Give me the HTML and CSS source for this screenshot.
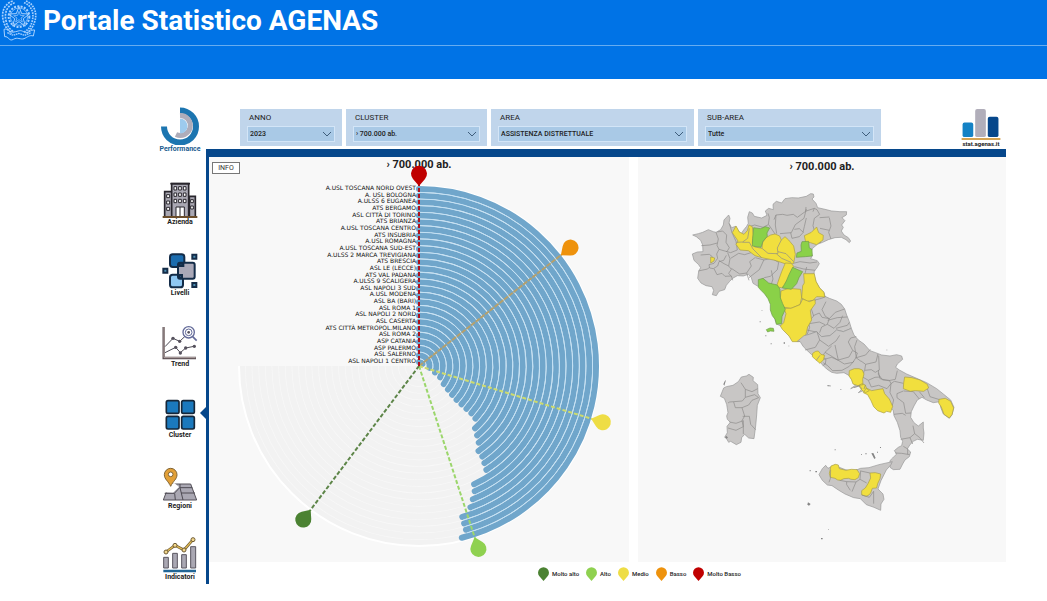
FILE: index.html
```html
<!DOCTYPE html>
<html lang="it">
  <head>
    <meta charset="UTF-8" />
    <meta name="viewport" content="width=device-width, initial-scale=1.0" />
    <title>Portale Statistico AGENAS</title>
    <link rel="stylesheet" href="styles.css">
  </head>
  <body>
    <header class="site-header">
      <div class="brand">
        <svg class="emblem" viewBox="0 0 114 123" aria-hidden="true">
          <g fill="none" stroke="#a9d2ff">
            <circle cx="57" cy="50" r="31" stroke-width="6" stroke-dasharray="6 4" />
            <circle cx="57" cy="50" r="26" stroke-width="2" />
            <path d="M57 20l8 21 23 1-18 14 6 22-19-13-19 13 6-22-18-14 23-1z" stroke-width="3" />
            <path d="M57 34l4 12 12 1-10 7 4 12-10-7-10 7 4-12-10-7 12-1z" stroke-width="2" />
            <path d="M38 3C12 12 3 38 10 62s16 30 26 38M44 8C22 16 12 38 18 62s14 26 24 34" stroke-width="5" stroke-dasharray="6 3" />
            <path d="M78 3c24 9 34 35 27 59s-16 30-26 38M72 8c22 8 31 30 25 54s-14 26-24 34" stroke-width="5" stroke-dasharray="5 3" />
            <path d="M12 88c12-4 16 10 30 8s18-8 30 0 18-8 32-6l-4 18c-12-4-18 4-28 8s-20-6-32 2-14-10-26-8z" stroke-width="3" />
            <path d="M22 98l18 8 16-6 18 6 20-8" stroke-width="4" stroke-dasharray="5 2" />
          </g>
        </svg>
        <h1>Portale Statistico AGENAS</h1>
      </div>
    </header>

    <main class="report">
      <aside class="sidebar">
        <a class="performance" href="#performance">
          <svg viewBox="0 0 40 38" aria-hidden="true">
            <path d="M20 4a16 16 0 1 1-16 16" fill="none" stroke="#1c75b0" stroke-width="6" />
            <path d="M20 9a10 10 0 1 1-4 19" fill="none" stroke="#aeadba" stroke-width="5" />
            <path d="M20 12a7 7 0 0 1 0 15z" fill="#9dcbee" />
          </svg>
          <span>Performance</span>
        </a>
        <nav class="menu" aria-label="Sezioni">
          <a href="#azienda">
            <svg viewBox="0 0 108 108" aria-hidden="true">
              <g fill="#aaa8b3" stroke="#29262d" stroke-width="5">
                <path d="M8 105V29h23v76zM82 105V43h18v62z" />
                <path d="M29 105V5h51v100z" />
                <path d="M25 5h59" />
              </g>
              <g fill="#fff" stroke="#29262d" stroke-width="3">
                <path d="M36 14h8v10h-8zM50 14h8v10h-8zM64 14h8v10h-8zM36 33h8v10h-8zM50 33h8v10h-8zM64 33h8v10h-8zM36 52h8v10h-8zM50 52h8v10h-8zM64 52h8v10h-8z" />
                <path d="M14 38h9v9h-9zM14 57h9v9h-9zM14 76h9v9h-9zM86 53h8v9h-8zM86 72h8v9h-8z" />
                <path d="M42 75h25v30H42zM54 75v30" />
              </g>
              <path d="M2 105h104" stroke="#6b4e2c" stroke-width="6" />
            </svg>
            <span>Azienda</span>
          </a>
          <a href="#livelli">
            <svg viewBox="0 0 108 108" aria-hidden="true">
              <g stroke="#142c48" stroke-width="6">
                <rect x="24" y="4" width="43" height="38" rx="8" fill="#1c6cae" />
                <rect x="24" y="65" width="39" height="38" rx="8" fill="#8fc7f2" />
                <rect x="48" y="29" width="50" height="48" rx="6" fill="#aaa8b7" />
                <path d="M51 32h13v7H51zM51 66h9v8h-9z" fill="#2c5c89" />
                <path d="M91 5h12v12H91zM4 47h12v12H4zM91 90h12v12H91z" fill="#4c8fb3" />
              </g>
            </svg>
            <span>Livelli</span>
          </a>
          <a href="#trend">
            <svg viewBox="0 0 108 108" aria-hidden="true">
              <path d="M5 9v93h97" fill="none" stroke="#594d51" stroke-width="7" />
              <path d="M6 9v92h95" fill="none" stroke="#b4a7a6" stroke-width="3" />
              <g fill="none" stroke="#4d4b55" stroke-width="3">
                <path d="M9 68l24-25 20 9 16-15M9 86l32-16 14 16 16-14 25-5" />
                <circle cx="80" cy="25" r="17" stroke="#636a99" stroke-width="4" />
                <circle cx="80" cy="25" r="10" stroke="#636a99" />
                <path d="M92 38l12 12" stroke="#636a99" stroke-width="5" />
              </g>
              <g fill="#55515d">
                <circle cx="33" cy="43" r="5" /><circle cx="53" cy="52" r="5" /><circle cx="80" cy="25" r="4" />
                <circle cx="41" cy="70" r="5" /><circle cx="55" cy="87" r="5" /><circle cx="71" cy="72" r="5" /><circle cx="97" cy="67" r="5" />
              </g>
            </svg>
            <span>Trend</span>
          </a>
          <a class="active" href="#cluster" aria-current="page">
            <svg viewBox="0 0 108 108" aria-hidden="true">
              <g fill="#1b79bd" stroke="#162739" stroke-width="5">
                <rect x="13" y="17" width="38" height="38" rx="5" /><rect x="59" y="17" width="38" height="38" rx="5" />
                <rect x="13" y="64" width="38" height="38" rx="5" /><rect x="59" y="64" width="38" height="38" rx="5" />
              </g>
            </svg>
            <span>Cluster</span>
          </a>
          <a href="#regioni">
            <svg viewBox="0 0 108 108" aria-hidden="true">
              <path d="M22 54h64l18 48H4z" fill="#aaa8b3" stroke="#555159" stroke-width="3" />
              <path d="M38 52h-18L9 79l24 1 18-17z" fill="#fff" />
              <path d="M8 82h29l16-17h38M40 102l-2-20M63 102l-9-37V54M57 81h42" fill="none" stroke="#4e4b53" stroke-width="3" />
              <path d="M26 61C19 45 7 40 7 26a19 19 0 0 1 38 0c0 14-12 19-19 35z" fill="#e2a038" stroke="#806333" stroke-width="3" />
              <circle cx="26" cy="25" r="7" fill="#fff" stroke="#806333" stroke-width="3" />
            </svg>
            <span>Regioni</span>
          </a>
          <a href="#indicatori">
            <svg viewBox="0 0 108 108" aria-hidden="true">
              <g fill="#aaa8b3" stroke="#5a5660" stroke-width="3">
                <path d="M5 61h14v32H5zM32 49h14v44H32zM59 53h14v40H59zM86 29h15v64H86z" />
              </g>
              <path d="M12 45l27-20 27 14 27-31" fill="none" stroke="#6f5c35" stroke-width="8" />
              <path d="M12 45l27-20 27 14 27-31" fill="none" stroke="#e3bc54" stroke-width="4" />
              <g fill="#f1d68b" stroke="#6f5c35" stroke-width="3">
                <circle cx="12" cy="45" r="6" /><circle cx="39" cy="25" r="6" /><circle cx="66" cy="39" r="6" /><circle cx="93" cy="8" r="6" />
              </g>
              <path d="M4 102h98" stroke="#226696" stroke-width="8" />
            </svg>
            <span>Indicatori</span>
          </a>
        </nav>
      </aside>

      <div class="content">
        <div class="toolbar">
          <form class="filters">
            <div class="filter">
              <label for="anno">ANNO</label>
              <div class="select-box">
                <select id="anno"><option>2023</option></select>
                <svg viewBox="0 0 8 5" aria-hidden="true"><path d="M0 0l4 4 4-4" /></svg>
              </div>
            </div>
            <div class="filter">
              <label for="cluster">CLUSTER</label>
              <div class="select-box">
                <select id="cluster"><option>› 700.000 ab.</option></select>
                <svg viewBox="0 0 8 5" aria-hidden="true"><path d="M0 0l4 4 4-4" /></svg>
              </div>
            </div>
            <div class="filter">
              <label for="area">AREA</label>
              <div class="select-box">
                <select id="area"><option>ASSISTENZA DISTRETTUALE</option></select>
                <svg viewBox="0 0 8 5" aria-hidden="true"><path d="M0 0l4 4 4-4" /></svg>
              </div>
            </div>
            <div class="filter">
              <label for="sub-area">SUB-AREA</label>
              <div class="select-box">
                <select id="sub-area"><option>Tutte</option></select>
                <svg viewBox="0 0 8 5" aria-hidden="true"><path d="M0 0l4 4 4-4" /></svg>
              </div>
            </div>
          </form>
          <a class="stat-logo" href="#stat">
            <svg viewBox="0 0 40 33" aria-hidden="true">
              <rect x="1" y="14" width="11" height="15" rx="2" fill="#1482c5" />
              <rect x="14" y="0" width="11" height="29" rx="2" fill="#b1aeba" />
              <rect x="27" y="8" width="11" height="21" rx="2" fill="#06478b" />
              <path d="M0 31h40" stroke="#d5a454" stroke-width="2" />
            </svg>
            <span>stat.agenas.it</span>
          </a>
        </div>

        <div class="board">
          <div class="panels">
            <section class="panel">
              <div class="panel-head">
                <button class="info-button" type="button">INFO</button>
                <h2>› 700.000 ab.</h2>
              </div>
              <svg class="chart" id="radial-chart" viewBox="209 175 420 387" role="img" aria-label="Performance per azienda"></svg>
            </section>

            <section class="panel">
              <div class="panel-head map-head">
                <h2>› 700.000 ab.</h2>
              </div>
              <svg class="map" viewBox="638 175 368 387" role="img" aria-label="Mappa delle aziende">
                <!-- Nord e centro -->
                <g transform="translate(680 185) scale(.3333)">
                  <path class="land" d="M38 150l17-4 13-4 17-8 15 6 8 2 14-8 8-14 2-15 14-15 4 10-3 15 8 13 12-4 8 13 8 10 8-12 9-11 5-9-2-18 5-17 9 4 6 10 22 5 16-8-5-13 10-8 14 4-1-16 10-9 16 5 10-13 20-3 20 1 24-5 13-8 8 1 2 9-6 6 12 13 5 13 22 5 20 5 25 2 20 0-1 10-13 8 9 9-10 13 5 7-6 11 8 12 13 8 7 10-4 5-10-9-14-7-19 1-20 6-17 8-16 6-14 12-5 10 4 12-5 9 20 6 6 9-8 14-7 8-1 10 6 22 10 18 14 14 3 12 13 6 22 8 14 10 10 14 6 18 8 20 6 20-24 10-20-5-20 17-25 3-15-15-22 8-16 4-20 17-12-4-10-11-15-15-11-15-14-7-5-12 2-24-7-15 4-26-10-22-10-16-14-5-16 7-15-9-5-17-9-10-15 5-18-1-14 8-9 9-10 12-5 13-17 5-8 13-12-3 4-13-5-11-18-3-15-8-10-14 3-21 6-11-7-10-13-12-5-19 15-6 17-1-1-20-6-14-13-11z" />
                  <path class="border" d="M64 182l26-2 22-6M108 142l7 20-4 19 6 12 24 7 7-12-10-16 2-22-12-12-16 3M148 115l8 28 12 26 4 26-20 8-14-4M62 210l26-2 10 8M117 193l-7 14 3 13-11 15-15 4 2 10 11 2 13-8 4-13 14-4 8-15M102 251l9 18 15-4 9 9 19-1 4 13M143 203l7 18-4 22 8 10-8 12 8 9M146 243l-14-7-16-10M55 258l28-6 6-6M152 220l24-15 18 4 22-7M154 250l25 17 21-3 14-21-5-13 16-12M200 264l7 22M207 278l31-24 14-30M226 218l26 7 22-5 22 12-4 22-21 20-18 4-12 10M274 256l5 26-6 19M208 125l16-5 25 7 16-8 3-22-4-12M266 119l20 29M282 104l6-14 20-2 13 3 19-3 12 9 25-18 1-13M288 90l-2 30 4 26M300 146l34-3 12-24 26-19 7-28M332 143l4 17 22-5 12-13-12-11-15 2M376 79l27-9 8 4M403 70l-4 10M379 99l-6 26-4 17M411 74l8 14-16 12-4 22 4 14M419 98l29-2M448 98l5 25-7 19 7 20M420 130l28 6M423 174l-8-8M340 235l20-5 30 4 21-3M343 245l28 7 35 4M375 266l5-20M405 345l20-5 12-5M406 345l-13 24 8 24-16 18 4 16-7 20M400 392l18-8 8 13 22 4M438 350l-12 24 10 20 12 7-6 17-17 8-6 17M388 416l30-5 17 8M448 401l18-19 28-10M443 406l29-8 30-2M442 418l20 12 18-18 8-20M468 430l34-9 6-9M380 435l29 6" />
                  <path class="medio" d="M157 143L168 123L178 141L192 148L202 137L207 120L217 125L220 150L217 172L224 186L246 190L248 172L258 158L272 150L285 147L299 153L304 165L315 155L326 165L341 183L346 208L341 235L315 236L285 226L245 218L225 212L205 197L180 195L168 178L174 168z" />
                  <path class="medio" d="M373 152l21-10 16-16 6 17 14 8-1 14-19 14-19-6-14-1zM316 234l18 1 7 9-8 18-8 19-9 20-11 7-16-2 8-24 8-22zM371 266l32 0 5 23 11 20 13 13 2 14-24-1-11 11-17 3-17-10 3-37 5-8zM303 318l23-8 36 3 3 25-5 21-27 11-28-4-5-13z" />
                  <path class="medio" d="M302 370l31 0 27-11 8-17 20 8 17-6 1 12-15 21 4 28-12 21-6 26-18 18-22 0-10-17-20-20-6-10 10-10 7-27-4-10z" />
                  <path class="medio" d="M92 216l12 3-2 9-10 6z" />
                  <path class="alto" d="M221 128l20 3 16-6 12 4-8 15 1 10-13 15-6 18-26-4 1-23zM366 170l20-1 2 20 8 4 1 20-21 2-27 2 2-13 13-5-1-19zM338 247l13 6 17 7-11 18-7 18-16 17-27-4 12-21 8-19zM235 284l14-4 17 14 26 6 8 13 1 25 7 18 8 17-10 22-1 21-16 2-3-14-9-12-6-17 0-17-7-17-10-14-11-11-8-9z" />
                  <path class="border" d="M170 172l18-1 15-11 5-30M188 172l20 0 11 20 26 26M246 190l18 15 25 1 16 14 28 12M304 165l-12 24 2 16 -5 1M294 200l24 6 23 24" />
                  <path class="alto" d="M259 434l11-5 10 1 2 9-11-1-8 3z" />
                  <path class="isle" d="M239 409h3v3h-3zM256 451h3v3h-3zM272 475h3v3h-3zM311 472h4v4h-4zM325 482h3v2h-3zM245 375h2v2h-2z" />
                </g>
                <!-- Sud e isole -->
                <g transform="translate(710 320) scale(.3333)">
                  <path class="land" d="M262 64l20-17 16-4 22-8 15 15 25-3 20-17 20 5 24-10 8 20 13 15 17 12 18 20 17 6 18 7 25 3 20-4 15 4 3 10-16 14-5 10 11 8 22 12 30 13 30 13 30 18 20 16 22 18 10 22-6 23-8 10-18-13-8-20-2-17-20 3-20-8-14-8-14 8-10 18-8 17-2 17 10 16 13 10 15-12 0 18 2 15-2 22-18-3-12 6-10 10-8 13 10 9-4 14-13 10-7 12-8 16-20 1-10-7 0-20 8-8 12-12-7-10 12-10 10-5 3-13-6-12-2-20-8-25-10-20-2-15-10-10-12 7-20-5-12-14-8-18-10-16-13-6-20 8 5-4 10-14-10-2-18 4-10 4 14-10-8-14-10-15-16-9-22 2-15-3-15-10-15-15-13-15-17-13-15-14-10-10-10-16z" />
                  <path class="border" d="M285 90l31-8 13-22-8-25M329 60l27 19 22-16 11-17M365 78l-20 19-8 13M345 97l22 13 18 11M375 75l6 28 4 17 32-9 11-20-13-25 7-12 17-4M342 118l23-6 20 9 18 11 26-5 10-16M340 128l13 9 15 15 28-1 22-12 14-16M337 110l11 8-2 14-8 5M429 92l13 7-4 14 15 11M441 60l-7 20 5 33 28-8 14-17M453 123l14 10-3 18 20-2 12 8 12-7-2-43M467 133l31-7 6-24M463 151l-5 20 17 10 9 20 22-5 25 10 12-15-5-10-20-1-13-17 1-13M475 181l20-9 16-1M506 158l4 18 26 6 20-4 6-26M543 191l10-7 27 6M543 191l-3 27 11 22-5 20M580 213l-19 8 0 12 20 15 6 32 16-1M552 283l25-3 10 6M581 213l29 2 18 22M628 215l15 18M652 206l8 24 29 9M572 358l28-5 14-12 14 11 14 17M614 341l-5-24M580 379l13 8 0 16M555 399l20 1 24 4M600 353l8 19" />
                  <path class="medio" d="M418 152l15-6 14 0 10 4 5 12-4 16 1 16-15 3-15-5-5-14-7-10zM447 196l9-5 10 4 4 11 8 6-12 6-10-7-6-8zM469 204l16 8 16-3 18-3 5 15 14 16 10 22-6 18-12-3-8 5-19-7-12-12-8-18-10-18-13-6zM584 171l22 2 24 7 22 13 4 11-15 10-25-2-15 2-21-8 1-17zM687 238l19-3 16 9 9 20-5 20-8 10-16-11-8-22-8-12z" />
                  <path class="medio" d="M308 100l9-6 8-1 8 10 11 3-4 14-10 10-13-11-10-9z" />
                  <path class="border" d="M330 106l-11 15M432 203l16-6 8 10M466 195l-4 12" />
                  <path class="land" d="M41 204l8-4 20-4 16-11 9-14 15-3 8-5 13 9-1 10 14 12 1 27 7 12-9 23-2 29-3 33-5 38-16-2-12-11-9 10-2 14-14 7-17-10-6 3-7-12-5-3 8-14-1-19 10-12-9-9-2-10 4-10-4-25-7-18-12-6z" />
                  <path class="border" d="M93 188l13 20 0 24-9 11-38 3-5 3M106 208l20 7 17-9M106 232l28-8 12 9M71 246l5 17 20 0 8 25-8 14 4 18-22 11-24-7M96 263l20-8 10-14 20-8M98 289l20 0 4 24 15 16M100 302l0 40M58 306l20 4 22-8" />
                  <path class="land" d="M327 464l10-18 10-10 7 9 21-10 13 7 18 7 22 5 24-9 25-2 30-9 40-9-4 9-14 16-7 14-9 18-9 25 15 15 3 16-9 14-1 19-20-9-23-8-18-18-20-3-26-11-20-12-19-13-14-2-15-14z" />
                  <path class="medio" d="M363 438l13-5 9 2 3 11 20 5 16-3 17 1 8 12-4 12-10 6-12-1-7-3-14 1-11 5-8-1-8-5-14-3-3-12zM480 459l16-1 16 4-2 14-7 15-3 13-13 1-5 14-5 6-9 4-13-4 0-13 11-8 8-13 8-17z" />
                  <path class="border" d="M362 449l-1 27-4 11M389 481l21 4 0 9 11 17M410 485l28 1 12-8 2-26M438 486l-12 29M450 478l20 11M452 453l28 6M456 525l22 7 13-18M491 514l0 37" />
                  <path class="isle" d="M299 450h3v4h-3zM316 453h5v4h-5zM294 547l8 5-5 5-5-3zM333 654h5v4h-5zM354 628h2v2h-2zM374 388h3v3h-3zM453 403h3v2h-3zM466 400h4v3h-4zM484 400l6-1 7 15-4 3zM501 395h3v3h-3zM510 381h3v3h-3zM352 195l11 2v2h-10zM391 208h3v2h-3zM529 89h3v2h-3zM45 351l5-3 4 5-5 3zM40 193l4-9 4-4-5 17z" />
                </g>
              </svg>
            </section>
          </div>

          <ul class="legend">
            <li class="molto-alto"><svg viewBox="-9 -10 18 22" aria-hidden="true"><path d="M0 12L-6 5A8 8 0 1 1 6 5z" /></svg>Molto alto</li>
            <li class="alto"><svg viewBox="-9 -10 18 22" aria-hidden="true"><path d="M0 12L-6 5A8 8 0 1 1 6 5z" /></svg>Alto</li>
            <li class="medio"><svg viewBox="-9 -10 18 22" aria-hidden="true"><path d="M0 12L-6 5A8 8 0 1 1 6 5z" /></svg>Medio</li>
            <li class="basso"><svg viewBox="-9 -10 18 22" aria-hidden="true"><path d="M0 12L-6 5A8 8 0 1 1 6 5z" /></svg>Basso</li>
            <li class="molto-basso"><svg viewBox="-9 -10 18 22" aria-hidden="true"><path d="M0 12L-6 5A8 8 0 1 1 6 5z" /></svg>Molto Basso</li>
          </ul>
        </div>
      </div>
    </main>

    <script src="chart.js"></script>
  </body>
</html>
```

FILE: styles.css
```css
/* Reset CSS */
* {
  margin: 0;
  padding: 0;
  box-sizing: border-box;
}

body {
  font-family: Roboto, "Liberation Sans", sans-serif;
  background-color: #fff;
  color: #222;
}

a {
  color: inherit;
  text-decoration: none;
}

svg {
  display: block;
}

/* Header */
.site-header {
  height: 79px;
  background-color: #0073e6;
  color: #fff;
}

.brand {
  display: flex;
  align-items: center;
  gap: 5px;
  height: 46px;
  padding-bottom: 4px;
  border-bottom: 1px solid #66acf0;
}

.emblem {
  width: 38px;
  height: 41px;
}

.brand h1 {
  font-size: 28px;
  line-height: 40px;
  font-weight: 700;
}

/* Report */
.report {
  display: flex;
  padding: 27px 41px 16px 158px;
}

.sidebar {
  width: 48px;
  padding-right: 4px;
  flex-shrink: 0;
}

.sidebar a {
  display: flex;
  flex-direction: column;
  align-items: center;
  font-size: 7px;
  line-height: 8px;
  font-weight: 700;
}

.sidebar .performance {
  color: #1a5c8f;
}

.performance svg {
  width: 40px;
  height: 39px;
}

.menu {
  margin-top: 29px;
}

.menu a {
  position: relative;
  height: 71px;
}

.menu svg {
  width: 36px;
  height: 36px;
}

.menu .active::after {
  content: "";
  position: absolute;
  top: 12px;
  right: -4px;
  border: 6px solid transparent;
  border-right-color: #06478b;
  border-left: 0;
}

.content {
  flex: 1;
  min-width: 0;
}

/* Filters */
.toolbar {
  display: flex;
  padding: 3px 5px 3px 34px;
}

.filters {
  flex: 1;
  display: grid;
  grid-template-columns: 102fr 141fr 203fr 183fr;
  gap: 4px;
  margin-right: 80px;
}

.filter {
  height: 37px;
  padding: 3px 7px;
  background-color: #c0d5eb;
}

.filter label {
  display: block;
  padding-left: 2px;
  font-size: 8px;
  line-height: 11px;
}

.select-box {
  display: grid;
  align-items: center;
  margin-top: 3px;
}

.select-box select,
.select-box svg {
  grid-area: 1 / 1;
}

.select-box select {
  width: 100%;
  height: 16px;
  padding: 0 2px;
  border: 1px solid #d3e5f7;
  border-radius: 0;
  background-color: #a9c9e6;
  color: #222;
  font-family: inherit;
  font-size: 7px;
  font-weight: 500;
  appearance: none;
}

.select-box svg {
  justify-self: end;
  width: 8px;
  height: 5px;
  margin-right: 4px;
  fill: none;
  stroke: #3f5e7c;
  pointer-events: none;
}

.stat-logo {
  width: 40px;
  height: 37px;
  font-size: 6px;
  line-height: 6px;
  font-weight: 700;
  text-align: center;
}

.stat-logo svg {
  width: 40px;
  height: 32px;
}

/* Panels */
.board {
  border-top: 8px solid #06478b;
  border-left: 3px solid #06478b;
}

.panels {
  display: grid;
  grid-template-columns: 420fr 368fr;
  gap: 9px;
}

.panel {
  background-color: #f8f8f8;
}

.panel-head {
  display: grid;
  grid-template-columns: 1fr auto 1fr;
  height: 18px;
}

.panel-head h2 {
  grid-column: 2;
  font-size: 11px;
  line-height: 16px;
  font-weight: 700;
}

.map-head {
  padding-top: 2px;
}

.info-button {
  justify-self: start;
  width: 28px;
  height: 12px;
  margin: 5px 0 0 3px;
  border: 1px solid #777;
  background-color: #fff;
  color: #333;
  font-family: inherit;
  font-size: 7px;
  line-height: 10px;
}

.chart,
.map {
  width: 100%;
  height: auto;
  overflow: visible;
}

/* Radial chart */
.track {
  fill: none;
  stroke: #f2f2f2;
  stroke-width: 6;
}

.rim {
  fill: none;
  stroke: #fff;
  stroke-width: 2;
}

.gap {
  fill: none;
  stroke: #b5def8;
  stroke-width: 2;
}

.bar {
  fill: none;
  stroke: #70a6cb;
  stroke-width: 6;
  stroke-linecap: round;
}

/* Light line over the edge between two bars */
.divider {
  fill: none;
  stroke: #c3e1f5;
  stroke-width: 1;
}

.name {
  font-family: "DejaVu Sans", sans-serif;
  font-size: 6px;
  text-anchor: end;
  fill: #111;
}

.needle {
  stroke-width: 1;
  stroke-dasharray: 4 2;
}

.needle.basso {
  stroke-dasharray: 5 1;
  stroke-width: 2;
  stroke: #b5a06c;
}

.needle.alto,
.needle.medio,
.needle.molto-alto {
  stroke-width: 2;
}

.needle.molto-alto { stroke: #5d8548; }
.needle.alto { stroke: #9bd66b; }
.needle.medio { stroke: #cddb6e; }
.needle.molto-basso { stroke: #b0101c; stroke-width: 2; }

.pin.molto-alto, .legend .molto-alto svg { fill: #4b8232; }
.pin.alto, .legend .alto svg { fill: #8fd150; }
.pin.medio, .legend .medio svg { fill: #eedd45; }
.pin.basso, .legend .basso svg { fill: #ee920c; }
.pin.molto-basso, .legend .molto-basso svg { fill: #c00000; }

/* Map */
.map path {
  stroke-width: 2;
  stroke-linejoin: round;
}

.map .land {
  fill: #c8c6c5;
  stroke: #969595;
}

.map .border {
  fill: none;
  stroke: #8b8988;
}

.map .medio {
  fill: #f1df3e;
  stroke: #a79d45;
}

.map .alto {
  fill: #8ad148;
  stroke: #6d994b;
}

.map .isle {
  fill: #858585;
}

/* Legend */
.legend {
  display: flex;
  gap: 6px;
  height: 22px;
  padding-left: 328px;
  list-style: none;
  font-size: 6px;
  font-weight: 500;
}

.legend li {
  display: flex;
  align-items: center;
  gap: 2px;
}

.legend svg {
  width: 13px;
  height: 15px;
}
```

FILE: chart.js
```js
const SVG_NS = "http://www.w3.org/2000/svg";
const chart = document.getElementById("radial-chart");
const cx = 419;
const cy = 366;
const outerRadius = 177;
const innerRadius = 4;

// From the outer ring to the inner one: name, end angle in degrees
const aziende = [
  ["A.USL TOSCANA NORD OVEST", 166],
  ["A. USL BOLOGNA", 164],
  ["A.ULSS 6 EUGANEA", 164],
  ["ATS BERGAMO", 164],
  ["ASL CITTÀ DI TORINO", 160],
  ["ATS BRIANZA", 158],
  ["A.USL TOSCANA CENTRO", 156],
  ["ATS INSUBRIA", 155],
  ["A.USL ROMAGNA", 147],
  ["A.USL TOSCANA SUD-EST", 146],
  ["A.ULSS 2 MARCA TREVIGIANA", 145],
  ["ATS BRESCIA", 145],
  ["ASL LE (LECCE)", 142],
  ["ATS VAL PADANA", 140],
  ["A.ULSS 9 SCALIGERA", 138],
  ["ASL NAPOLI 3 SUD", 133],
  ["A.USL MODENA", 132],
  ["ASL BA (BARI)", 132],
  ["ASL ROMA 1", 132],
  ["ASL NAPOLI 2 NORD", 132],
  ["ASL CASERTA", 131],
  ["ATS CITTÀ METROPOL.MILANO", 129],
  ["ASL ROMA 2", 126],
  ["ASP CATANIA", 118],
  ["ASP PALERMO", 112],
  ["ASL SALERNO", 100],
  ["ASL NAPOLI 1 CENTRO", 60]
];

const needles = [
  ["basso", 52],
  ["medio", 107],
  ["alto", 162],
  ["molto-alto", 217],
  ["molto-basso", 0]
];

function add(tag, className, attributes) {
  const el = document.createElementNS(SVG_NS, tag);
  el.setAttribute("class", className);
  for (const key in attributes) {
    el.setAttribute(key, attributes[key]);
  }
  chart.appendChild(el);
  return el;
}

function point(radius, degrees) {
  const angle = degrees * Math.PI / 180;
  return [cx + radius * Math.sin(angle), cy - radius * Math.cos(angle)];
}

function arc(radius, degrees) {
  const [x, y] = point(radius, degrees);
  const large = degrees > 180 ? 1 : 0;
  return `M${cx} ${cy - radius}A${radius} ${radius} 0 ${large} 1 ${x} ${y}`;
}

const step = (outerRadius - innerRadius) / (aziende.length - 1);

aziende.forEach((azienda, i) => {
  add("path", "track", { d: arc(outerRadius - i * step, 270) });
});
add("path", "rim", { d: arc(outerRadius + 3, 270) });

aziende.forEach(([name, degrees], i) => {
  const r = outerRadius - i * step;
  add("path", "bar", { d: arc(r, degrees) });
  add("text", "name", { x: cx - 3, y: cy - r + 1 }).textContent = name;
});

aziende.slice(1).forEach(([name, degrees], i) => {
  add("path", "divider", { d: arc(outerRadius - (i + 1) * step + step / 2, degrees) });
});

needles.forEach(([level, degrees]) => {
  const [x, y] = point(181, degrees);
  add("line", "needle " + level, { x1: cx, y1: cy, x2: x, y2: y });
  add("path", "pin " + level, {
    d: "M0 12L-6 5A8 8 0 1 1 6 5z",
    transform: `translate(${cx} ${cy}) rotate(${degrees}) translate(0 -192)`
  });
});
```
